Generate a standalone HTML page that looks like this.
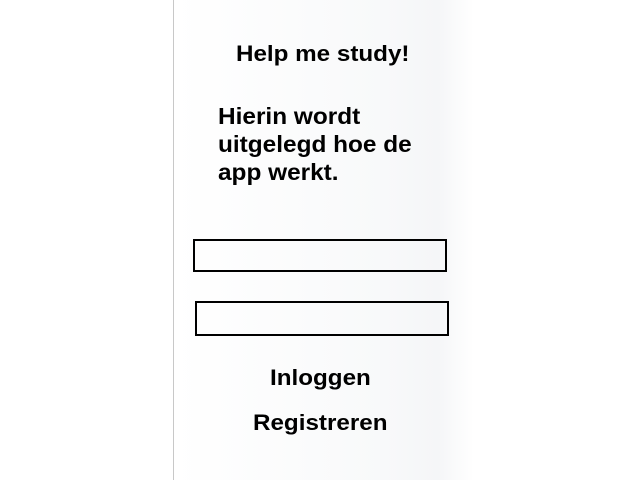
<!DOCTYPE html>
<html><head><style>
html,body{margin:0;padding:0;width:640px;height:480px;overflow:hidden;background:#fff;font-family:"Liberation Sans",Arial,sans-serif;font-weight:bold;color:#000}
.line{position:absolute;left:173px;top:0;width:1px;height:480px;background:#c8c8c8}
.panel{position:absolute;left:174px;top:0;width:300px;height:480px;background:linear-gradient(to right,#fff 0%,#f8f9fa 70%,#f5f6f8 88%,#fff 100%)}
.t{position:absolute;white-space:nowrap;transform-origin:left top}
.box{position:absolute;border:2px solid #000;box-sizing:border-box;background:transparent}
</style></head><body>
<div class="line"></div>
<div class="panel"></div>
<div class="t" style="left:236px;top:41px;font-size:22px;transform:scaleX(1.1)">Help me study!</div>
<div class="t" style="left:218px;top:102px;font-size:23px;line-height:28px;transform:scaleX(1.06)">Hierin wordt<br>uitgelegd hoe de<br>app werkt.</div>
<div class="box" style="left:193px;top:239px;width:254px;height:33px"></div>
<div class="box" style="left:195px;top:301px;width:254px;height:35px"></div>
<div class="t" style="left:270px;top:365px;font-size:22px;transform:scaleX(1.1)">Inloggen</div>
<div class="t" style="left:253px;top:410px;font-size:22px;transform:scaleX(1.1)">Registreren</div>
</body></html>
